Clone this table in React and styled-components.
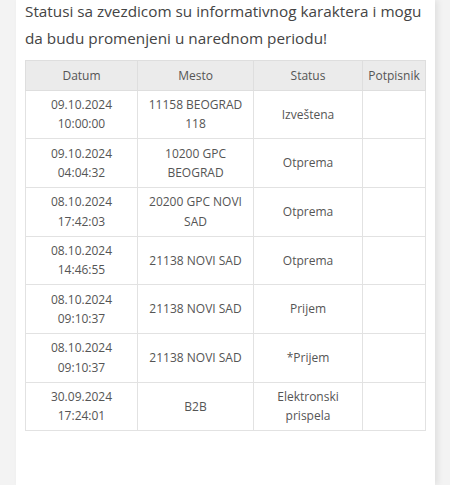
import React from 'react';
import styled, { createGlobalStyle } from 'styled-components';

const GlobalStyle = createGlobalStyle`
  html, body {
    margin: 0;
    padding: 0;
    background: #f3f3f3;
    font-family: "Open Sans", "Liberation Sans", sans-serif;
  }
`;

const Page = styled.div`
  display: flex;
  min-height: 485px;
`;

const Card = styled.div`
  margin-left: 16px;
  width: 419px;
  min-height: 485px;
  box-sizing: border-box;
  background: #fff;
  padding: 0 10px 0 9px;
  box-shadow: 3px 0 6px rgba(0, 0, 0, 0.08);
`;

const Note = styled.p`
  margin: -2px -10px 8px 0;
  font-size: 15.3px;
  line-height: 27px;
  color: #444;
`;

const Table = styled.table`
  width: 400px;
  border-collapse: collapse;
  table-layout: fixed;
  font-size: 12px;
  line-height: 19.5px;
  color: #555;
`;

const Th = styled.th`
  font-weight: normal;
  background: #ebebeb;
  border: 1px solid #dedede;
  padding: 4.5px 2px;
  text-align: center;
`;

const Td = styled.td`
  border: 1px solid #e2e2e2;
  padding: 4.35px 4px;
  text-align: center;
  vertical-align: middle;
`;

const rows = [
  ['09.10.2024 10:00:00', '11158 BEOGRAD 118', 'Izveštena'],
  ['09.10.2024 04:04:32', '10200 GPC BEOGRAD', 'Otprema'],
  ['08.10.2024 17:42:03', '20200 GPC NOVI SAD', 'Otprema'],
  ['08.10.2024 14:46:55', '21138 NOVI SAD', 'Otprema'],
  ['08.10.2024 09:10:37', '21138 NOVI SAD', 'Prijem'],
  ['08.10.2024 09:10:37', '21138 NOVI SAD', '*Prijem'],
  ['30.09.2024 17:24:01', 'B2B', 'Elektronski prispela'],
];

export default function App() {
  return (
    <Page>
      <GlobalStyle />
      <Card>
        <Note>Statusi sa zvezdicom su informativnog karaktera i mogu da budu promenjeni u narednom periodu!</Note>
        <Table>
          <colgroup>
            <col style={{ width: 112 }} />
            <col style={{ width: 116 }} />
            <col style={{ width: 109 }} />
            <col style={{ width: 63 }} />
          </colgroup>
          <thead>
            <tr>
              <Th>Datum</Th>
              <Th>Mesto</Th>
              <Th>Status</Th>
              <Th>Potpisnik</Th>
            </tr>
          </thead>
          <tbody>
            {rows.map(([date, place, status], i) => (
              <tr key={i}>
                <Td>{date}</Td>
                <Td>{place}</Td>
                <Td>{status}</Td>
                <Td></Td>
              </tr>
            ))}
          </tbody>
        </Table>
      </Card>
    </Page>
  );
}
